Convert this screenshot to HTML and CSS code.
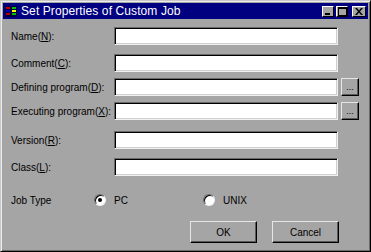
FILE: index.html
```html
<!DOCTYPE html>
<html lang="en">
<head>
  <meta charset="UTF-8" />
  <title>Set Properties of Custom Job</title>
  <link rel="stylesheet" href="styles.css">
</head>
<body>
  <div class="window">
    <div class="titlebar">
      <svg class="app-icon" width="12" height="11" viewBox="0 0 12 11">
        <rect x="0" y="0" width="12" height="11" fill="#000040"/>
        <rect x="1" y="1" width="4" height="2" fill="#c00000"/>
        <rect x="1" y="4" width="4" height="2" fill="#0000c0"/>
        <rect x="1" y="7" width="4" height="2" fill="#c00000"/>
        <rect x="7" y="1" width="4" height="2" fill="#00c000"/>
        <rect x="7" y="4" width="4" height="2" fill="#ffff00"/>
        <rect x="7" y="7" width="4" height="2" fill="#00c000"/>
      </svg>
      <span class="title">Set Properties of Custom Job</span>
      <div class="title-buttons">
        <span class="tbtn">
          <svg width="8" height="8" viewBox="0 0 8 8"><rect x="1" y="6" width="5" height="2" fill="#000"/></svg>
        </span>
        <span class="tbtn">
          <svg width="9" height="9" viewBox="0 0 9 9"><rect x="0.5" y="0.5" width="8" height="8" fill="none" stroke="#000"/><rect x="0" y="0" width="9" height="2" fill="#000"/></svg>
        </span>
        <span class="tbtn close">
          <svg width="8" height="7" viewBox="0 0 8 7"><path d="M0 0h2l2 2.5L6 0h2L5 3.5 8 7H6L4 4.5 2 7H0l3-3.5z" fill="#000"/></svg>
        </span>
      </div>
    </div>

    <div class="content">
      <div class="row r-name">
        <label>Name(<u>N</u>):</label>
        <input class="field" type="text" />
      </div>
      <div class="row r-comment">
        <label>Comment(<u>C</u>):</label>
        <input class="field" type="text" />
      </div>
      <div class="row r-define">
        <label>Defining program(<u>D</u>):</label>
        <input class="field" type="text" />
        <button class="browse">...</button>
      </div>
      <div class="row r-exec">
        <label>Executing program(<u>X</u>):</label>
        <input class="field" type="text" />
        <button class="browse">...</button>
      </div>
      <div class="row r-version">
        <label>Version(<u>R</u>):</label>
        <input class="field" type="text" />
      </div>
      <div class="row r-class">
        <label>Class(<u>L</u>):</label>
        <input class="field" type="text" />
      </div>

      <div class="job-type">
        <span class="job-label">Job Type</span>
        <span class="option opt-pc"><span class="radio checked"></span>PC</span>
        <span class="option"><span class="radio"></span>UNIX</span>
      </div>

      <div class="actions">
        <button class="btn">OK</button>
        <button class="btn">Cancel</button>
      </div>
    </div>
  </div>
</body>
</html>
```

FILE: styles.css
```css
body {
  margin: 0;
  font-family: "Liberation Sans", Arial, sans-serif;
  font-size: 10px;
  color: #000;
  background-color: #a5a5a5;
}

.window {
  width: 371px;
  height: 252px;
  box-sizing: border-box;
  padding: 3px;
  background-color: #a5a5a5;
  border: 1px solid;
  border-color: #c8c8c8 #000 #000 #c8c8c8;
  box-shadow: inset 1px 1px 0 #ececec, inset -1px -1px 0 #6a6a6a;
}

.titlebar {
  height: 16px;
  margin: -1px -1px 0 -1px;
  background-color: #000080;
  color: #fff;
  display: flex;
  align-items: center;
  padding: 0 2px 0 2px;
}

.app-icon {
  margin-right: 4px;
}

.title {
  font-size: 12px;
  flex: 1;
  letter-spacing: 0.1px;
}

.title-buttons {
  display: flex;
  gap: 2px;
}

.tbtn {
  width: 12px;
  height: 11px;
  background-color: #a5a5a5;
  border: 1px solid;
  border-color: #fff #000 #000 #fff;
  box-sizing: border-box;
  display: flex;
  align-items: center;
  justify-content: center;
}

.tbtn.close {
  margin-left: 2px;
  width: 14px;
}

.content {
  padding: 8px 0 0 7px;
}

.row {
  display: grid;
  grid-template-columns: 100px 224px 18px;
  column-gap: 3px;
  align-items: center;
  height: 18px;
}

.row label {
  white-space: nowrap;
}

.r-comment { margin-top: 9px; }
.r-define { margin-top: 6px; }
.r-exec { margin-top: 6px; }
.r-version { margin-top: 11px; }
.r-class { margin-top: 9px; }

label u {
  text-decoration-thickness: 1px;
  text-underline-offset: 1px;
}

.field {
  height: 18px;
  width: 224px;
  box-sizing: border-box;
  margin: 0;
  padding: 0 3px;
  background: #fff;
  border: 1px solid;
  border-color: #6a6a6a #f0f0f0 #f0f0f0 #6a6a6a;
  box-shadow: inset 1px 1px 0 #000, inset -1px -1px 0 #cfcfcf;
  font: inherit;
  outline: none;
}

.browse, .btn {
  margin: 0;
  padding: 0;
  font: inherit;
  color: #000;
  background-color: #a5a5a5;
  border: 1px solid;
  border-color: #e6e6e6 #000 #000 #e6e6e6;
  box-shadow: inset -1px -1px 0 #5a5a5a;
  box-sizing: border-box;
}

.browse {
  width: 18px;
  height: 18px;
  font-size: 9px;
  line-height: 12px;
}

.job-type {
  display: flex;
  align-items: center;
  height: 12px;
  margin-top: 18px;
}

.job-label {
  width: 83px;
}

.option {
  display: flex;
  align-items: center;
  gap: 8px;
}

.opt-pc {
  width: 109px;
}

.radio {
  width: 12px;
  height: 12px;
  box-sizing: border-box;
  border-radius: 50%;
  background: #fff;
  border: 1px solid;
  border-color: #6a6a6a #f0f0f0 #f0f0f0 #6a6a6a;
  box-shadow: inset 1px 1px 0 #000;
  position: relative;
}

.radio.checked::after {
  content: "";
  position: absolute;
  left: 3px;
  top: 3px;
  width: 4px;
  height: 4px;
  border-radius: 50%;
  background: #000;
}

.actions {
  display: flex;
  gap: 15px;
  margin: 15px 0 0 179px;
}

.btn {
  width: 67px;
  height: 22px;
}
```
